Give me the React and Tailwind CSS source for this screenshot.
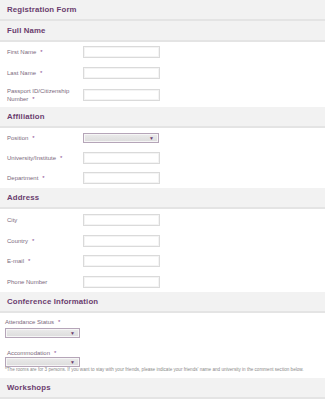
import React from "react";

const font = { fontFamily: '"Liberation Sans", Arial, sans-serif' };

function Band({ children }) {
  return (
    <div className="h-[21px] flex items-center px-[7px] bg-[#f2f2f2] bg-[radial-gradient(#e3e3e3_0.6px,transparent_0.7px)] bg-[length:4px_4px] border-b-2 border-[#e4e4e4]">
      <span className="text-[7.8px] font-bold text-[#6a3d6e] leading-none tracking-[0.15px]">{children}</span>
    </div>
  );
}

function Star() {
  return <span className="text-[#8a4a8e] ml-[4px]">*</span>;
}

function Input() {
  return <div className="w-[77px] h-[12px] bg-white border border-[#dadada] shadow-[inset_0_0_0_1px_#f4f4f4]" />;
}

function Select({ w = "w-[75px]" }) {
  return (
    <div className={`${w} h-[10px] border border-[#b5a5b8] bg-gradient-to-b from-[#ebebeb] to-[#dcdcdc] flex items-center justify-end pr-[4px] shadow-[inset_0_0_0_1px_#f6f6f6]`}>
      <span className="text-[#6a3d6e] text-[5px] leading-none">▼</span>
    </div>
  );
}

function Row({ label, req, h = "h-[20px]", children }) {
  return (
    <div className={`${h} flex items-center`}>
      <div className="w-[83px] pl-[7px] text-[6px] leading-[8px] text-[#7a6a7d] shrink-0">
        {label}
        {req && <Star />}
      </div>
      {children || <Input />}
    </div>
  );
}

export default function App() {
  return (
    <div className="w-[325px] h-[400px] overflow-hidden bg-white" style={font}>
      <Band>Registration Form</Band>
      <Band>Full Name</Band>
      <Row label="First Name" req />
      <Row label="Last Name" req h="h-[21px]" />
      <div className="h-[24px] flex items-center">
        <div className="w-[83px] pl-[7px] text-[6px] leading-[8px] text-[#7a6a7d] shrink-0">
          Passport ID/Citizenship<br />Number<Star />
        </div>
        <Input />
      </div>
      <Band>Affiliation</Band>
      <Row label="Position" req>
        <Select w="w-[76px]" />
      </Row>
      <Row label="University/Institute" req />
      <Row label="Department" req />
      <Band>Address</Band>
      <Row label="City" h="h-[21px]" />
      <Row label="Country" req h="h-[21px]" />
      <Row label="E-mail" req h="h-[20px]" />
      <Row label="Phone Number" h="h-[21px]" />
      <Band>Conference Information</Band>
      <div className="pl-[5px] pt-[5px] h-[65px]">
        <div className="text-[6px] leading-[8px] text-[#7a6a7d]">
          Attendance Status<Star />
        </div>
        <div className="mt-[2px]">
          <Select />
        </div>
        <div className="mt-[11px] pl-[2px] text-[6px] leading-[8px] text-[#7a6a7d]">
          Accommodation<Star />
        </div>
        <div>
          <Select />
        </div>
        <div className="text-[4.6px] leading-[6px] text-[#8a8a8a] whitespace-nowrap">
          *The rooms are for 3 persons. If you want to stay with your friends, please indicate your friends' name and university in the comment section below.
        </div>
      </div>
      <Band>Workshops</Band>
    </div>
  );
}
